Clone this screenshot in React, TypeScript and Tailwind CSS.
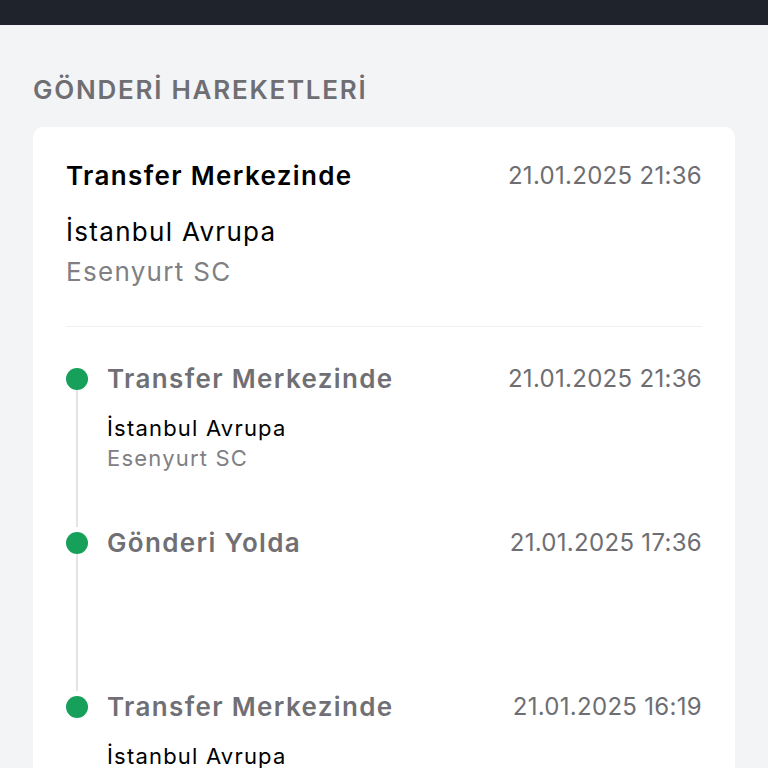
const events = [
  { title: "Transfer Merkezinde", date: "21.01.2025 21:36", city: "İstanbul Avrupa", branch: "Esenyurt SC" },
  { title: "Gönderi Yolda", date: "21.01.2025 17:36" },
  { title: "Transfer Merkezinde", date: "21.01.2025 16:19", city: "İstanbul Avrupa", branch: "Esenyurt SC" },
];

type Ev = (typeof events)[number];

function TimelineItem({ ev, last }: { ev: Ev; last: boolean }) {
  return (
    <div className="flex gap-[19px] min-h-[164px]">
      <div className="flex flex-col items-center w-[22px] pt-[5px]">
        <div className="w-[22px] h-[22px] rounded-full bg-[#16a05a] shrink-0" />
        {!last && <div className="w-[2px] flex-1 bg-[#e4e4e6]" />}
      </div>
      <div className="flex-1 min-w-0">
        <div className="flex items-center justify-between leading-[32px]">
          <span className="text-[26px] font-semibold text-[#707074] tracking-[1.35px]">{ev.title}</span>
          <span className="text-[24px] text-[#6e6e72] tracking-[0.3px]">{ev.date}</span>
        </div>
        {ev.city && (
          <div className="mt-[18px] text-[22px] leading-[30px] tracking-[1.2px]">
            <div className="text-black">{ev.city}</div>
            <div className="text-[#808084]">{ev.branch}</div>
          </div>
        )}
      </div>
    </div>
  );
}

export default function App() {
  const latest = events[0];
  return (
    <div className="min-h-[768px] bg-[#f3f4f6]" style={{ fontFamily: "Inter, 'Noto Sans', sans-serif" }}>
      <div className="h-[25px] bg-[#1f232b]" />
      <main className="px-[33px] pt-[49px]">
        <h2 className="text-[26px] leading-[32px] font-semibold text-[#6e6e73] tracking-[1.75px]">
          GÖNDERİ HAREKETLERİ
        </h2>
        <div className="mt-[21px] bg-white rounded-[10px] px-[33px] pt-[33px]">
          <div className="flex items-center justify-between leading-[32px]">
            <span className="text-[26px] font-semibold text-black tracking-[1.35px]">{latest.title}</span>
            <span className="text-[24px] text-[#6e6e72] tracking-[0.3px]">{latest.date}</span>
          </div>
          <div className="mt-[20px] text-[26px] leading-[40px] tracking-[1.3px]">
            <div className="text-black">{latest.city}</div>
            <div className="text-[#808084]">{latest.branch}</div>
          </div>
          <div className="mt-[34px] h-px bg-[#f0f0f2]" />
          <div className="pt-[36px]">
            {events.map((ev, i) => (
              <TimelineItem key={i} ev={ev} last={i === events.length - 1} />
            ))}
          </div>
        </div>
      </main>
    </div>
  );
}
